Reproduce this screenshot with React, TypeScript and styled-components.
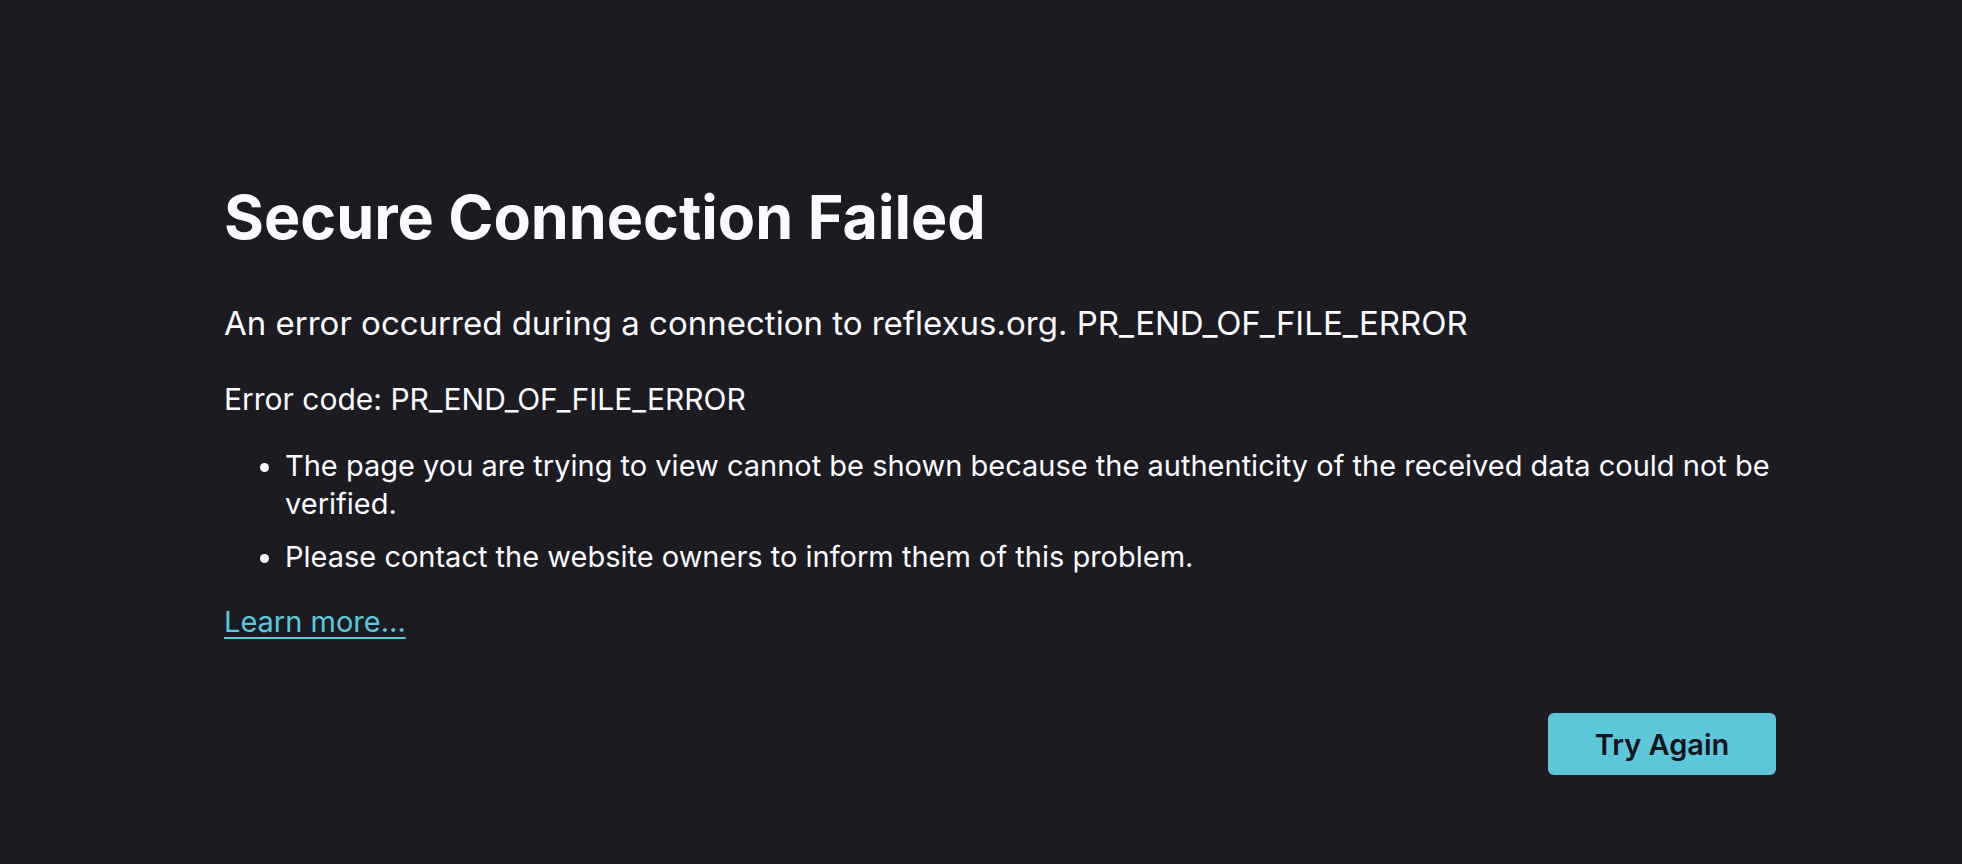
import React from "react";
import styled, { createGlobalStyle } from "styled-components";

const Global = createGlobalStyle`
  html, body {
    margin: 0;
    padding: 0;
    background: #1c1b22;
  }
  body {
    font-family: Inter, "Noto Sans", "Liberation Sans", sans-serif;
    color: #fbfbfe;
  }
`;

const Page = styled.main`
  min-height: 864px;
  box-sizing: border-box;
  padding: 181px 0 0 224px;
`;

const Container = styled.div`
  width: 1552px;
  display: flex;
  flex-direction: column;
`;

const Title = styled.h1`
  margin: 0;
  font-size: 61px;
  line-height: 73px;
  font-weight: 700;
`;

const Lead = styled.p`
  margin: 49px 0 0;
  font-size: 33px;
  line-height: 40px;
  font-weight: 400;
`;

const Code = styled.p`
  margin: 37px 0 0;
  font-size: 30px;
  line-height: 38px;
`;

const List = styled.ul`
  margin: 29px 0 0;
  padding-left: 61px;
  font-size: 29px;
  line-height: 38px;
`;

const Item = styled.li`
  & + & {
    margin-top: 15px;
  }
`;

const LearnMore = styled.a`
  margin-top: 27px;
  align-self: flex-start;
  font-size: 29px;
  line-height: 38px;
  color: #5bc8dc;
  text-decoration: underline;
  text-underline-offset: 5px;
  text-decoration-thickness: 2px;
  cursor: pointer;
`;

const Actions = styled.div`
  margin-top: 72px;
  display: flex;
  justify-content: flex-end;
`;

const Button = styled.button`
  width: 228px;
  height: 62px;
  border: none;
  border-radius: 6px;
  background: #5bc7d9;
  color: #15141a;
  font-family: inherit;
  font-size: 29px;
  font-weight: 600;
  cursor: pointer;
`;

export default function App() {
  return (
    <Page>
      <Global />
      <Container>
        <Title>Secure Connection Failed</Title>
        <Lead>
          An error occurred during a connection to reflexus.org. PR_END_OF_FILE_ERROR
        </Lead>
        <Code>Error code: PR_END_OF_FILE_ERROR</Code>
        <List>
          <Item>
            The page you are trying to view cannot be shown because the authenticity of the
            received data could not be verified.
          </Item>
          <Item>Please contact the website owners to inform them of this problem.</Item>
        </List>
        <LearnMore>Learn more…</LearnMore>
        <Actions>
          <Button>Try Again</Button>
        </Actions>
      </Container>
    </Page>
  );
}
